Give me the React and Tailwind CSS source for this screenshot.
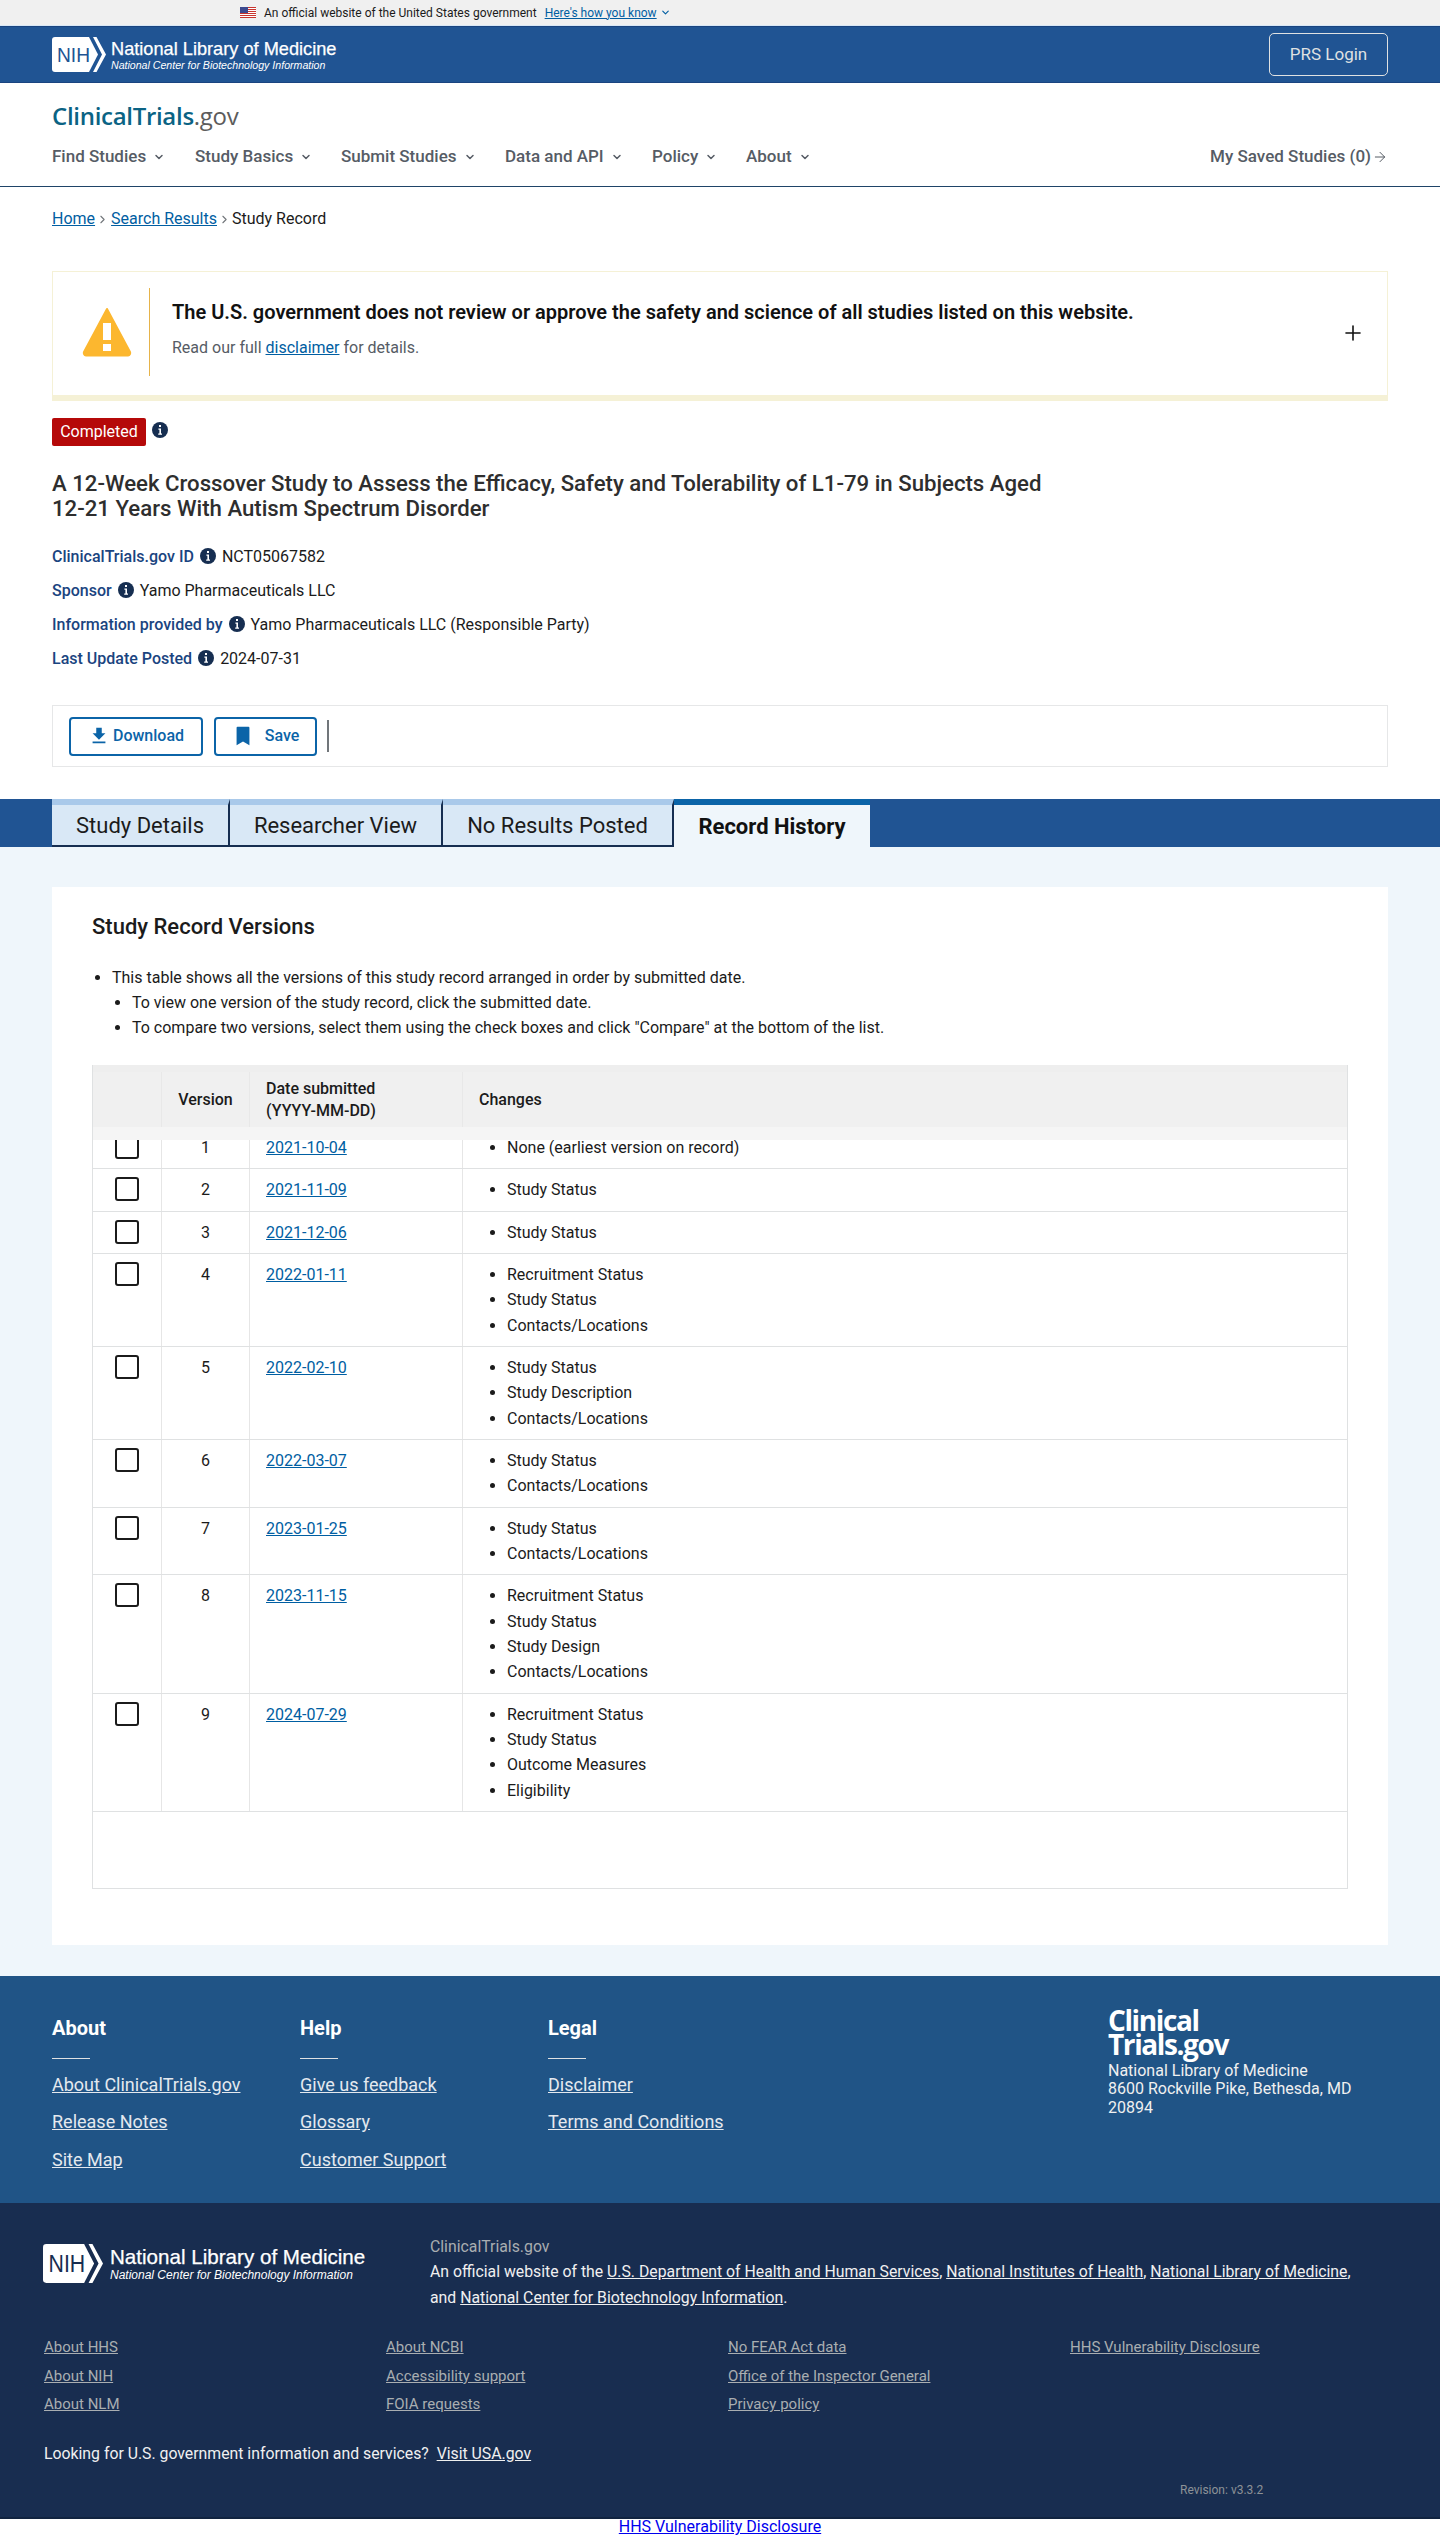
import { ChevronDown, ChevronRight, ArrowRight, Plus } from 'lucide-react';

const navItems = ['Find Studies', 'Study Basics', 'Submit Studies', 'Data and API', 'Policy', 'About'];
const navWidths = ['w-[143px]', 'w-[146px]', 'w-[164px]', 'w-[147px]', 'w-[94px]', 'w-[80px]'];

const versions = [
    { v: 1, date: '2021-10-04', changes: ['None (earliest version on record)'] },
    { v: 2, date: '2021-11-09', changes: ['Study Status'] },
    { v: 3, date: '2021-12-06', changes: ['Study Status'] },
    { v: 4, date: '2022-01-11', changes: ['Recruitment Status', 'Study Status', 'Contacts/Locations'] },
    { v: 5, date: '2022-02-10', changes: ['Study Status', 'Study Description', 'Contacts/Locations'] },
    { v: 6, date: '2022-03-07', changes: ['Study Status', 'Contacts/Locations'] },
    { v: 7, date: '2023-01-25', changes: ['Study Status', 'Contacts/Locations'] },
    { v: 8, date: '2023-11-15', changes: ['Recruitment Status', 'Study Status', 'Study Design', 'Contacts/Locations'] },
    { v: 9, date: '2024-07-29', changes: ['Recruitment Status', 'Study Status', 'Outcome Measures', 'Eligibility'] },
];

const meta = [
    { label: 'ClinicalTrials.gov ID', value: 'NCT05067582' },
    { label: 'Sponsor', value: 'Yamo Pharmaceuticals LLC' },
    { label: 'Information provided by', value: 'Yamo Pharmaceuticals LLC (Responsible Party)' },
    { label: 'Last Update Posted', value: '2024-07-31' },
];

const footerCols = [
    { title: 'About', width: 'w-[248px]', links: ['About ClinicalTrials.gov', 'Release Notes', 'Site Map'] },
    { title: 'Help', width: 'w-[248px]', links: ['Give us feedback', 'Glossary', 'Customer Support'] },
    { title: 'Legal', width: 'w-[248px]', links: ['Disclaimer', 'Terms and Conditions'] },
];

const legalCols = [
    ['About HHS', 'About NIH', 'About NLM'],
    ['About NCBI', 'Accessibility support', 'FOIA requests'],
    ['No FEAR Act data', 'Office of the Inspector General', 'Privacy policy'],
    ['HHS Vulnerability Disclosure'],
];

function InfoIcon() {
    return (
        <svg viewBox="0 0 16 16" className="w-4 h-4 shrink-0">
            <circle cx="8" cy="8" r="8" fill="#162e51" />
            <rect x="7" y="3" width="2" height="2" fill="#fff" />
            <path d="M6.4 6.6h2.6v5h1v1.2H6.2v-1.2h1.2V7.8h-1z" fill="#fff" />
        </svg>
    );
}

function NihMark({ className, fill }) {
    return (
        <svg viewBox="0 0 54 35" className={className}>
            <path d="M3 0H37L46 17.5L37 35H3a3 3 0 0 1-3-3V3a3 3 0 0 1 3-3z" fill="#fff" />
            <path d="M41 0h3.5L54 17.5L44.5 35H41l9-17.5z" fill="#fff" />
            <text x="5" y="25" fontFamily="'Liberation Sans', sans-serif" fontSize="21" textLength="33" lengthAdjust="spacingAndGlyphs" fill={fill}>NIH</text>
        </svg>
    );
}

function Flag() {
    return (
        <svg viewBox="0 0 16 11" className="w-4 h-[11px] shrink-0">
            <rect width="16" height="11" fill="#fff" />
            <path d="M0 0h16v1H0zM0 2h16v1H0zM0 4h16v1H0zM0 6h16v1H0zM0 8h16v1H0zM0 10h16v1H0z" fill="#c8352f" />
            <rect width="8" height="6" fill="#3c4a8f" />
        </svg>
    );
}

function Checkbox() {
    return <div className="w-6 h-6 border-2 border-[#1b1b1b] rounded-[3px] bg-white" />;
}

function Row({ item }) {
    return (
        <div className={`flex border-b border-[#dfe1e2] ${item.v === 1 ? '-mt-[13px]' : ''}`}>
            <div className="w-[69px] shrink-0 border-r border-[#e6e6e6] pt-2 flex justify-center">
                <Checkbox />
            </div>
            <div className="w-[88px] shrink-0 border-r border-[#e6e6e6] py-2 text-center leading-[25.33px]">{item.v}</div>
            <div className="w-[213px] shrink-0 border-r border-[#e6e6e6] py-2 pl-4 leading-[25.33px]">
                <a className="text-[#005ea2] underline">{item.date}</a>
            </div>
            <ul className="flex-1 list-disc py-2 pl-[44px] leading-[25.33px]">
                {item.changes.map((c) => <li key={c}>{c}</li>)}
            </ul>
        </div>
    );
}

export default function App() {
    return (
        <div className="font-['Roboto',sans-serif] text-[16px] text-[#1b1b1b] bg-white">
            {/* gov banner */}
            <div className="h-[26px] bg-[#f0f0f0] border-b border-[#d9e8f6] pl-[240px] flex items-center text-[12px]">
                <Flag />
                <span className="ml-2 text-[#1b1b1b]">An official website of the United States government</span>
                <a className="ml-2 text-[#005ea2] underline">Here's how you know</a>
                <ChevronDown size={11} strokeWidth={2.5} className="ml-[3px] text-[#005ea2]" />
            </div>

            {/* NLM bar */}
            <div className="h-[57px] bg-[#205493] border-y border-[#1a4480] px-[52px] flex items-center justify-between">
                <div className="flex items-center">
                    <NihMark className="w-[54px] h-[35px]" fill="#205493" />
                    <div className="ml-[5px] text-white font-['Liberation_Sans',sans-serif] [-webkit-text-stroke:0.25px_white]">
                        <div className="text-[18.2px] leading-[20px]">National Library of Medicine</div>
                        <div className="text-[10.6px] leading-[12px] italic [-webkit-text-stroke:0px]">National Center for Biotechnology Information</div>
                    </div>
                </div>
                <a className="w-[119px] h-[43px] border border-[#dfe1e2] rounded-[5px] flex items-center justify-center text-[17px] text-[#dfe1e2]">PRS Login</a>
            </div>

            {/* site header */}
            <div className="h-[104px] border-b border-[#1f4468] px-[52px]">
                <div className="pt-[19px] h-[62px] text-[24px] leading-[28px] font-semibold font-['Open_Sans',sans-serif] tracking-[-0.3px]">
                    <span className="text-[#0b6384]">ClinicalTrials</span><span className="text-[#5c5c5c] font-medium">.gov</span>
                </div>
                <div className="flex items-center justify-between h-[24px] text-[17px]">
                    <div className="flex">
                        {navItems.map((n, i) => (
                            <div key={n} className={`flex items-center font-medium text-[#565c65] ${navWidths[i]}`}>
                                {n}
                                <ChevronDown size={12} strokeWidth={3} className="ml-[7px]" />
                            </div>
                        ))}
                    </div>
                    <div className="flex items-center font-medium text-[#565c65]">
                        My Saved Studies (0)
                        <ArrowRight size={16} strokeWidth={1.5} className="ml-[1px]" />
                    </div>
                </div>
            </div>

            {/* breadcrumb */}
            <div className="h-[84px] pt-[20px] px-[52px] flex items-start leading-[24px]">
                <a className="text-[#005ea2] underline">Home</a>
                <ChevronRight size={13} className="mx-[1px] mt-[6px] text-[#71767a]" />
                <a className="text-[#005ea2] underline ml-[1px]">Search Results</a>
                <ChevronRight size={13} className="mx-px mt-[6px] text-[#71767a]" />
                <span>Study Record</span>
            </div>

            {/* disclaimer */}
            <div className="mx-[52px] h-[130px] border border-[#f5f1d6] border-b-[6px] flex relative">
                <div className="w-[98px] h-[123px] pt-[16px] flex items-start">
                    <div className="w-[97px] h-[88px] border-r border-[#e6b34a] flex items-center pl-[28px]">
                        <svg viewBox="0 0 52 52" className="w-[52px] h-[52px]">
                            <path d="M26 3L49 46a2.5 2.5 0 0 1-2 3.5H5a2.5 2.5 0 0 1-2-3.5z" fill="#fcb72f" stroke="#fcb72f" strokeWidth="2" strokeLinejoin="round" />
                            <rect x="22" y="17" width="8" height="17" fill="#fff" />
                            <rect x="22" y="38" width="8" height="7" fill="#fff" />
                        </svg>
                    </div>
                </div>
                <div className="pl-[21px] pt-[28px]">
                    <div className="text-[20px] leading-[24px] font-semibold text-[#111]">The U.S. government does not review or approve the safety and science of all studies listed on this website.</div>
                    <div className="mt-[12px] leading-[24px] text-[#565c65]">Read our full <a className="text-[#005ea2] underline">disclaimer</a> for details.</div>
                </div>
                <Plus size={24} strokeWidth={1.6} className="absolute right-[22px] top-[49px] text-[#111]" />
            </div>

            {/* status */}
            <div className="mt-[17px] px-[52px] flex items-start">
                <span className="w-[94px] h-[28px] bg-[#b50909] rounded-[2px] text-white flex items-center justify-center">Completed</span>
                <span className="ml-[6px] mt-[4px]"><InfoIcon /></span>
            </div>

            {/* title */}
            <h1 className="mt-[25px] px-[52px] text-[22.2px] leading-[25px] font-medium text-[#2e2e2e] max-w-[1100px]">
                A 12-Week Crossover Study to Assess the Efficacy, Safety and Tolerability of L1-79 in Subjects Aged<br />12-21 Years With Autism Spectrum Disorder
            </h1>

            {/* meta rows */}
            <div className="mt-[19px] px-[52px]">
                {meta.map((m) => (
                    <div key={m.label} className="h-[34px] flex items-center">
                        <span className="font-medium text-[#1a4480]">{m.label}</span>
                        <span className="ml-[6px] -mt-[3px]"><InfoIcon /></span>
                        <span className="ml-[6px]">{m.value}</span>
                    </div>
                ))}
            </div>

            {/* actions */}
            <div className="mt-[29px] mx-[52px] h-[62px] border border-[#e6e7e8] pl-[16px] flex items-center">
                <button className="w-[134px] h-[39px] border-2 border-[#0b64a8] rounded-[4px] flex items-center justify-center font-medium text-[#0b64a8]">
                    <svg viewBox="0 0 24 24" className="w-[22px] h-[22px] fill-[#0b64a8]"><path d="M19 9h-4V3H9v6H5l7 7 7-7zM5 18v2h14v-2H5z" /></svg>
                    <span className="ml-[3px]">Download</span>
                </button>
                <button className="ml-[11px] w-[103px] h-[39px] border-2 border-[#0b64a8] rounded-[4px] flex items-center justify-center font-medium text-[#0b64a8]">
                    <svg viewBox="0 0 24 24" className="w-[22px] h-[22px] fill-[#0b64a8]"><path d="M6 2h12a1 1 0 0 1 1 1v19l-7-4-7 4V3a1 1 0 0 1 1-1z" /></svg>
                    <span className="ml-[11px]">Save</span>
                </button>
                <div className="ml-[10px] w-[2px] h-[32px] bg-[#71767a]" />
            </div>

            {/* tabs */}
            <div className="mt-[32px] h-[48px] bg-[#205493] pl-[52px] flex">
                {[['Study Details', 'w-[178px]'], ['Researcher View', 'w-[213px]'], ['No Results Posted', 'w-[231px]']].map(([t, w]) => (
                    <div key={t} className={`${w} bg-[#d9e8f6] border-t-[6px] border-t-[#a9c9ea] border-b-2 border-b-[#162e51] border-r-2 border-r-[#162e51] text-[22px] flex items-center justify-center text-[#1b1b1b]`}>{t}</div>
                ))}
                <div className="w-[196px] bg-[#eff6fb] border-t-[6px] border-t-[#0b64a8] text-[22px] font-bold flex items-center justify-center text-[#111]">Record History</div>
            </div>

            {/* content */}
            <div className="bg-[#eff6fb] pt-[40px] pb-[31px] px-[52px]">
                <div className="bg-white px-[40px] pt-[27px] pb-[56px]">
                    <h2 className="text-[22px] leading-[26px] font-medium">Study Record Versions</h2>
                    <ul className="mt-[25px] list-disc pl-5 leading-[25px]">
                        <li>This table shows all the versions of this study record arranged in order by submitted date.
                            <ul className="list-disc pl-5">
                                <li>To view one version of the study record, click the submitted date.</li>
                                <li>To compare two versions, select them using the check boxes and click "Compare" at the bottom of the list.</li>
                            </ul>
                        </li>
                    </ul>

                    <div className="mt-[25px] border-x border-[#dfe1e2]">
                        <div className="relative z-10 h-[75px] bg-[#f5f5f5] font-medium">
                            <div className="h-[62px] bg-[#f0f0f0] border-t-[7px] border-t-[#eeeeee] flex items-center">
                                <div className="w-[69px] h-full border-r border-[#e8e8e8]" />
                                <div className="w-[88px] h-full border-r border-[#e8e8e8] flex items-center justify-center">Version</div>
                                <div className="w-[213px] h-full border-r border-[#e8e8e8] pl-4 flex flex-col justify-center leading-[22px]">
                                    <span>Date submitted</span>
                                    <span>(YYYY-MM-DD)</span>
                                </div>
                                <div className="pl-4">Changes</div>
                            </div>
                        </div>
                        {versions.map((item) => <Row key={item.v} item={item} />)}
                        <div className="h-[77px] border-b border-[#dfe1e2]" />
                    </div>
                </div>
            </div>

            {/* footer */}
            <div className="h-[227px] bg-[#205486] text-white px-[52px] flex justify-between">
                <div className="flex pt-[39px]">
                    {footerCols.map((col) => (
                        <div key={col.title} className={col.width}>
                            <div className="text-[20px] leading-[26px] font-bold">{col.title}</div>
                            <div className="mt-[17px] w-[38px] h-px bg-[#dfe1e2]" />
                            <div className="mt-[14px] flex flex-col gap-[13.5px] text-[18px] leading-[24px] text-[#e4e9ef]">
                                {col.links.map((l) => <a key={l} className="underline w-fit">{l}</a>)}
                            </div>
                        </div>
                    ))}
                </div>
                <div className="w-[280px] pt-[32px]">
                    <div className="text-[28px] leading-[24px] font-bold font-['Open_Sans',sans-serif] tracking-[-1.4px]">Clinical<br />Trials.gov</div>
                    <div className="mt-[6px] leading-[18.5px] text-[#f0f0f0]">
                        National Library of Medicine<br />8600 Rockville Pike, Bethesda, MD<br />20894
                    </div>
                </div>
            </div>

            <div className="h-[316px] bg-[#182d50] border-b-2 border-[#11233f] pl-[44px] relative">
                <div className="flex pt-[37px]">
                    <div className="flex items-center h-[48px] w-[386px]">
                        <NihMark className="w-[60px] h-[41px] -ml-px" fill="#182d50" />
                        <div className="ml-[7px] text-white font-['Liberation_Sans',sans-serif] [-webkit-text-stroke:0.25px_white]">
                            <div className="text-[20.6px] leading-[23px]">National Library of Medicine</div>
                            <div className="text-[12px] leading-[14px] italic [-webkit-text-stroke:0px]">National Center for Biotechnology Information</div>
                        </div>
                    </div>
                    <div className="leading-[25.5px] -mt-[6px] w-[960px] text-[15.8px]">
                        <div className="text-[#a9aeb1]">ClinicalTrials.gov</div>
                        <div className="text-[#f0f0f0]">
                            An official website of the <a className="underline">U.S. Department of Health and Human Services</a>, <a className="underline">National Institutes of Health</a>, <a className="underline">National Library of Medicine</a>,<br />and <a className="underline">National Center for Biotechnology Information</a>.
                        </div>
                    </div>
                </div>
                <div className="mt-[27px] flex text-[15px] text-[#a9aeb1]">
                    {legalCols.map((col) => (
                        <div key={col[0]} className="w-[342px] flex flex-col gap-[8.5px] leading-[20px]">
                            {col.map((l) => <a key={l} className="underline w-fit">{l}</a>)}
                        </div>
                    ))}
                </div>
                <div className="mt-[28px] leading-[24px] text-[15.8px] text-[#f0f0f0]">
                    Looking for U.S. government information and services?&nbsp; <a className="underline">Visit USA.gov</a>
                </div>
                <div className="absolute left-[1180px] top-[279px] text-[12px] leading-[16px] text-[#8d9297]">Revision: v3.3.2</div>
            </div>

            <div className="h-[17px] flex justify-center items-center overflow-hidden">
                <a className="text-[#0000ee] underline">HHS Vulnerability Disclosure</a>
            </div>
        </div>
    );
}
